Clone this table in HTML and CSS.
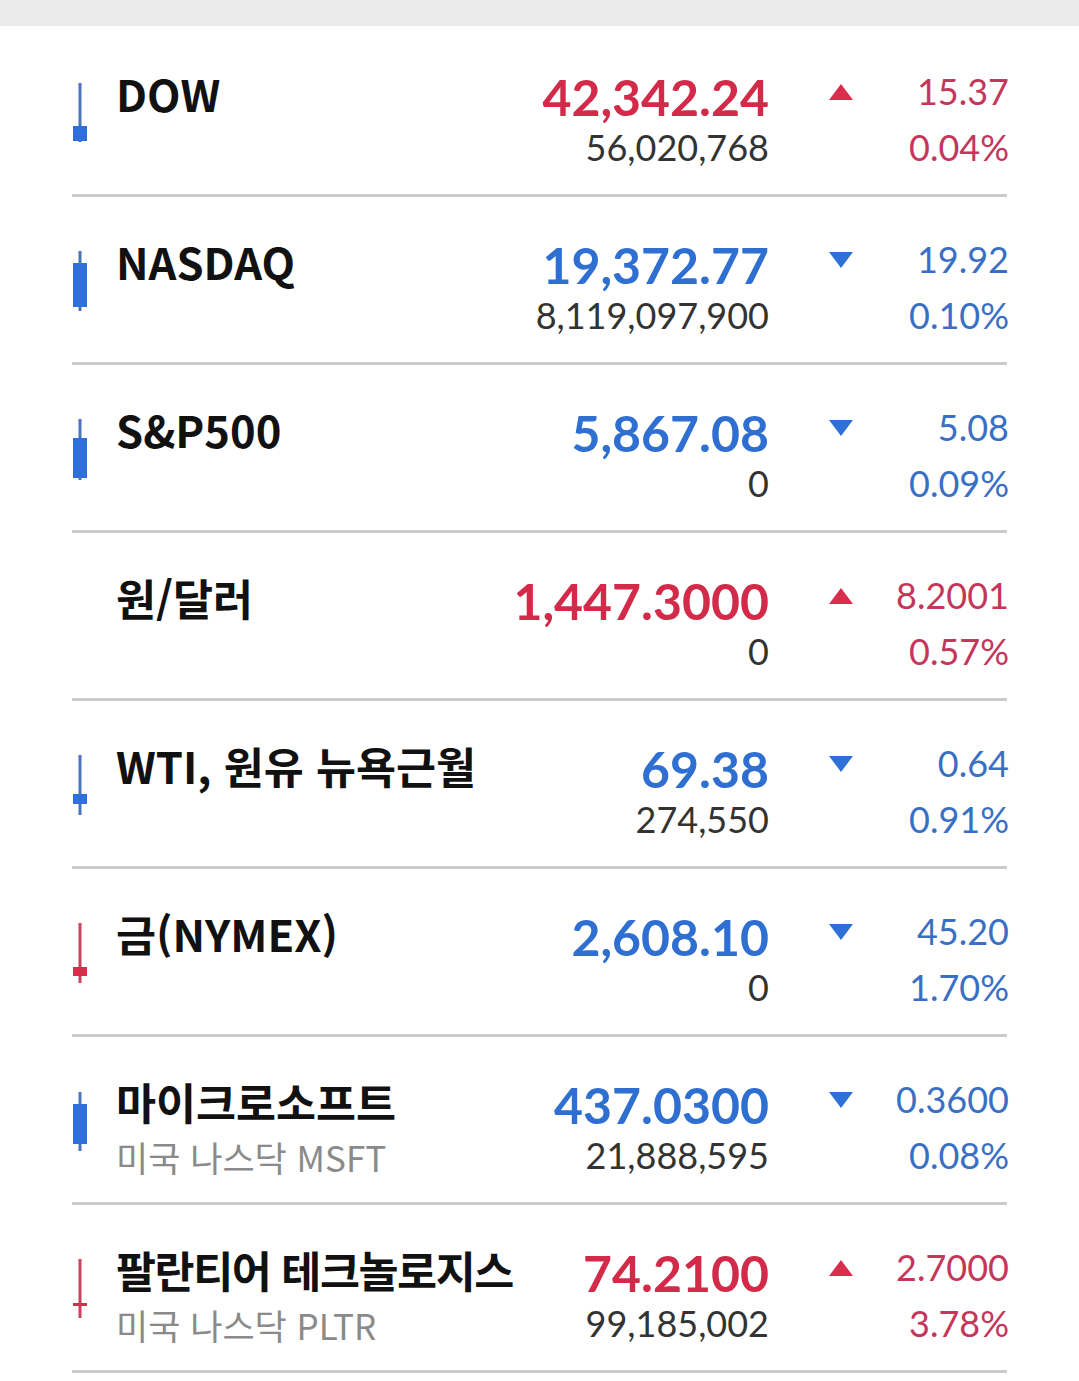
FILE: index.html
```html
<!DOCTYPE html>
<html lang="ko">
<head>
<meta charset="utf-8">
<link rel="stylesheet" href="styles.css">
</head>
<body>
<div class="topbar"></div>
<ul class="list">
  <li class="row">
    <div class="icon"><svg width="16" height="62" viewBox="0 0 16 62"><rect class="wick-b" x="6.5" y="0" width="3" height="59"/><rect class="body-b" x="1" y="43" width="14" height="15"/></svg></div>
    <div class="name"><div class="title">DOW</div></div>
    <div class="price"><div class="val up">42,342.24</div><div class="vol">56,020,768</div></div>
    <div class="tri"><span class="t-up"></span></div>
    <div class="chg up"><div>15.37</div><div>0.04%</div></div>
  </li>
  <li class="row">
    <div class="icon"><svg width="16" height="62" viewBox="0 0 16 62"><rect class="wick-b" x="6.5" y="0" width="3" height="60"/><rect class="body-b" x="1" y="12" width="14" height="44"/></svg></div>
    <div class="name"><div class="title">NASDAQ</div></div>
    <div class="price"><div class="val down">19,372.77</div><div class="vol">8,119,097,900</div></div>
    <div class="tri"><span class="t-down"></span></div>
    <div class="chg down"><div>19.92</div><div>0.10%</div></div>
  </li>
  <li class="row">
    <div class="icon"><svg width="16" height="62" viewBox="0 0 16 62"><rect class="wick-b" x="6.5" y="0" width="3" height="61"/><rect class="body-b" x="1" y="19" width="14" height="40"/></svg></div>
    <div class="name"><div class="title">S&amp;P500</div></div>
    <div class="price"><div class="val down">5,867.08</div><div class="vol">0</div></div>
    <div class="tri"><span class="t-down"></span></div>
    <div class="chg down"><div>5.08</div><div>0.09%</div></div>
  </li>
  <li class="row">
    <div class="icon"></div>
    <div class="name"><div class="title">원/달러</div></div>
    <div class="price"><div class="val up">1,447.3000</div><div class="vol">0</div></div>
    <div class="tri"><span class="t-up"></span></div>
    <div class="chg up"><div>8.2001</div><div>0.57%</div></div>
  </li>
  <li class="row">
    <div class="icon"><svg width="16" height="62" viewBox="0 0 16 62"><rect class="wick-b" x="6.5" y="0" width="3" height="60"/><rect class="body-b" x="1" y="39" width="14" height="10"/></svg></div>
    <div class="name"><div class="title">WTI, 원유 뉴욕근월</div></div>
    <div class="price"><div class="val down">69.38</div><div class="vol">274,550</div></div>
    <div class="tri"><span class="t-down"></span></div>
    <div class="chg down"><div>0.64</div><div>0.91%</div></div>
  </li>
  <li class="row">
    <div class="icon"><svg width="16" height="62" viewBox="0 0 16 62"><rect class="wick-r" x="6.5" y="0" width="3" height="60"/><rect class="body-r" x="1" y="44" width="14" height="9"/></svg></div>
    <div class="name"><div class="title">금(NYMEX)</div></div>
    <div class="price"><div class="val down">2,608.10</div><div class="vol">0</div></div>
    <div class="tri"><span class="t-down"></span></div>
    <div class="chg down"><div>45.20</div><div>1.70%</div></div>
  </li>
  <li class="row">
    <div class="icon"><svg width="16" height="62" viewBox="0 0 16 62"><rect class="wick-b" x="6.5" y="1" width="3" height="59"/><rect class="body-b" x="1" y="13" width="14" height="40"/></svg></div>
    <div class="name"><div class="title">마이크로소프트</div><div class="sub">미국 나스닥 MSFT</div></div>
    <div class="price"><div class="val down">437.0300</div><div class="vol">21,888,595</div></div>
    <div class="tri"><span class="t-down"></span></div>
    <div class="chg down"><div>0.3600</div><div>0.08%</div></div>
  </li>
  <li class="row">
    <div class="icon"><svg width="16" height="62" viewBox="0 0 16 62"><rect class="wick-r" x="6.5" y="0" width="3" height="59"/><rect class="body-r" x="1" y="44" width="14" height="3"/></svg></div>
    <div class="name"><div class="title tight">팔란티어 테크놀로지스</div><div class="sub">미국 나스닥 PLTR</div></div>
    <div class="price"><div class="val up">74.2100</div><div class="vol">99,185,002</div></div>
    <div class="tri"><span class="t-up"></span></div>
    <div class="chg up"><div>2.7000</div><div>3.78%</div></div>
  </li>
</ul>
</body>
</html>
```

FILE: styles.css
```css
html, body {
  margin: 0;
  padding: 0;
  background: #ffffff;
}
.topbar {
  height: 26px;
  background: #ebebeb;
}
.list {
  list-style: none;
  margin: 0;
  padding: 3px 72px 0 72px;
}
.row {
  display: grid;
  grid-template-columns: 44px 1fr auto 86px 154px;
  height: 165px;
  border-bottom: 3px solid #cccccc;
  box-sizing: content-box;
}
.icon {
  padding-top: 54px;
  line-height: 0;
}
.icon svg { display: block; }
.wick-b { fill: #4a76b8; }
.body-b { fill: #2f6fdb; }
.wick-r { fill: #c8445f; }
.body-r { fill: #d92d4c; }
.name {
  padding-top: 38px;
  min-width: 0;
}
.title {
  font-family: "Noto Sans CJK KR", "Noto Sans", sans-serif;
  font-weight: 700;
  font-size: 43.5px;
  line-height: 54px;
  color: #111111;
  white-space: nowrap;
}
.title.tight {
  letter-spacing: -1.4px;
}
.sub {
  font-family: "Noto Sans CJK KR", "Noto Sans", sans-serif;
  font-weight: 400;
  font-size: 35px;
  line-height: 56px;
  color: #8a8a8a;
  white-space: nowrap;
}
.price {
  padding-top: 41px;
  margin-right: -2px;
  text-align: right;
  font-family: Lato, "Liberation Sans", sans-serif;
}
.val {
  font-weight: 700;
  font-size: 50px;
  line-height: 54px;
  white-space: nowrap;
}
.val.up { color: #d42a4a; }
.val.down { color: #2f6fd2; }
.vol {
  font-size: 36px;
  line-height: 46px;
  color: #333333;
  white-space: nowrap;
}
.tri {
  padding-top: 55px;
  justify-self: end;
}
.t-up, .t-down {
  display: block;
  width: 0;
  height: 0;
  border-left: 12px solid transparent;
  border-right: 12px solid transparent;
}
.t-up { border-bottom: 16px solid #d92d4c; }
.t-down { border-top: 16px solid #2f6fd8; }
.chg {
  padding-top: 35px;
  margin-right: -2px;
  text-align: right;
  font-family: Lato, "Liberation Sans", sans-serif;
  font-size: 36px;
  line-height: 54px;
  white-space: nowrap;
}
.chg div + div { line-height: 58px; }
.chg.up { color: #c4375a; }
.chg.down { color: #3a70c4; }
```
